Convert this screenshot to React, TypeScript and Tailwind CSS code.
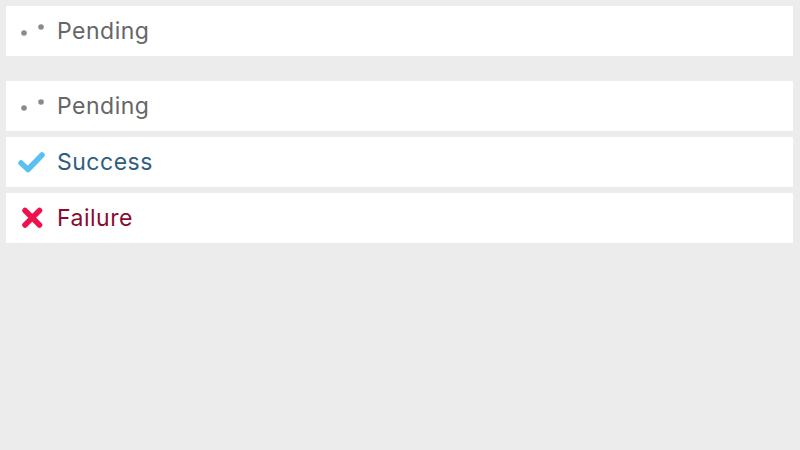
import React from "react";

function Dots() {
  return (
    <svg width="32" height="20" viewBox="0 0 32 20" className="shrink-0">
      <circle cx="6" cy="12" r="2.8" fill="#8a8a8a" />
      <circle cx="23" cy="6" r="2.8" fill="#8a8a8a" />
    </svg>
  );
}

function Check() {
  return (
    <svg width="32" height="22" viewBox="0 0 32 22" className="shrink-0">
      <path d="M3 12 L10 18.5 L24 4" fill="none" stroke="#5ac0f2" strokeWidth="5.5" strokeLinecap="round" strokeLinejoin="round" />
    </svg>
  );
}

function Cross() {
  return (
    <svg width="32" height="22" viewBox="0 0 32 22" className="shrink-0">
      <path d="M7 3.5 L21.5 18 M21.5 3.5 L7 18" fill="none" stroke="#f0104c" strokeWidth="5.5" strokeLinecap="round" />
    </svg>
  );
}

function Row({ icon, label, color }: { icon: React.ReactNode; label: string; color: string }) {
  return (
    <div className="flex h-[50px] items-center bg-white pl-[12px]">
      {icon}
      <span className={`ml-[7px] text-[23px] leading-none tracking-[0.5px] ${color}`}>{label}</span>
    </div>
  );
}

export default function App() {
  return (
    <div
      className="min-h-[450px] w-[800px] bg-[#ececec] pt-[6px] pl-[6px] pr-[7px]"
      style={{ fontFamily: "Inter, 'Liberation Sans', sans-serif" }}
    >
      <Row icon={<Dots />} label="Pending" color="text-[#666666]" />
      <div className="mt-[25px] flex flex-col gap-[6px]">
        <Row icon={<Dots />} label="Pending" color="text-[#666666]" />
        <Row icon={<Check />} label="Success" color="text-[#2f5f7f]" />
        <Row icon={<Cross />} label="Failure" color="text-[#8a0a30]" />
      </div>
    </div>
  );
}
